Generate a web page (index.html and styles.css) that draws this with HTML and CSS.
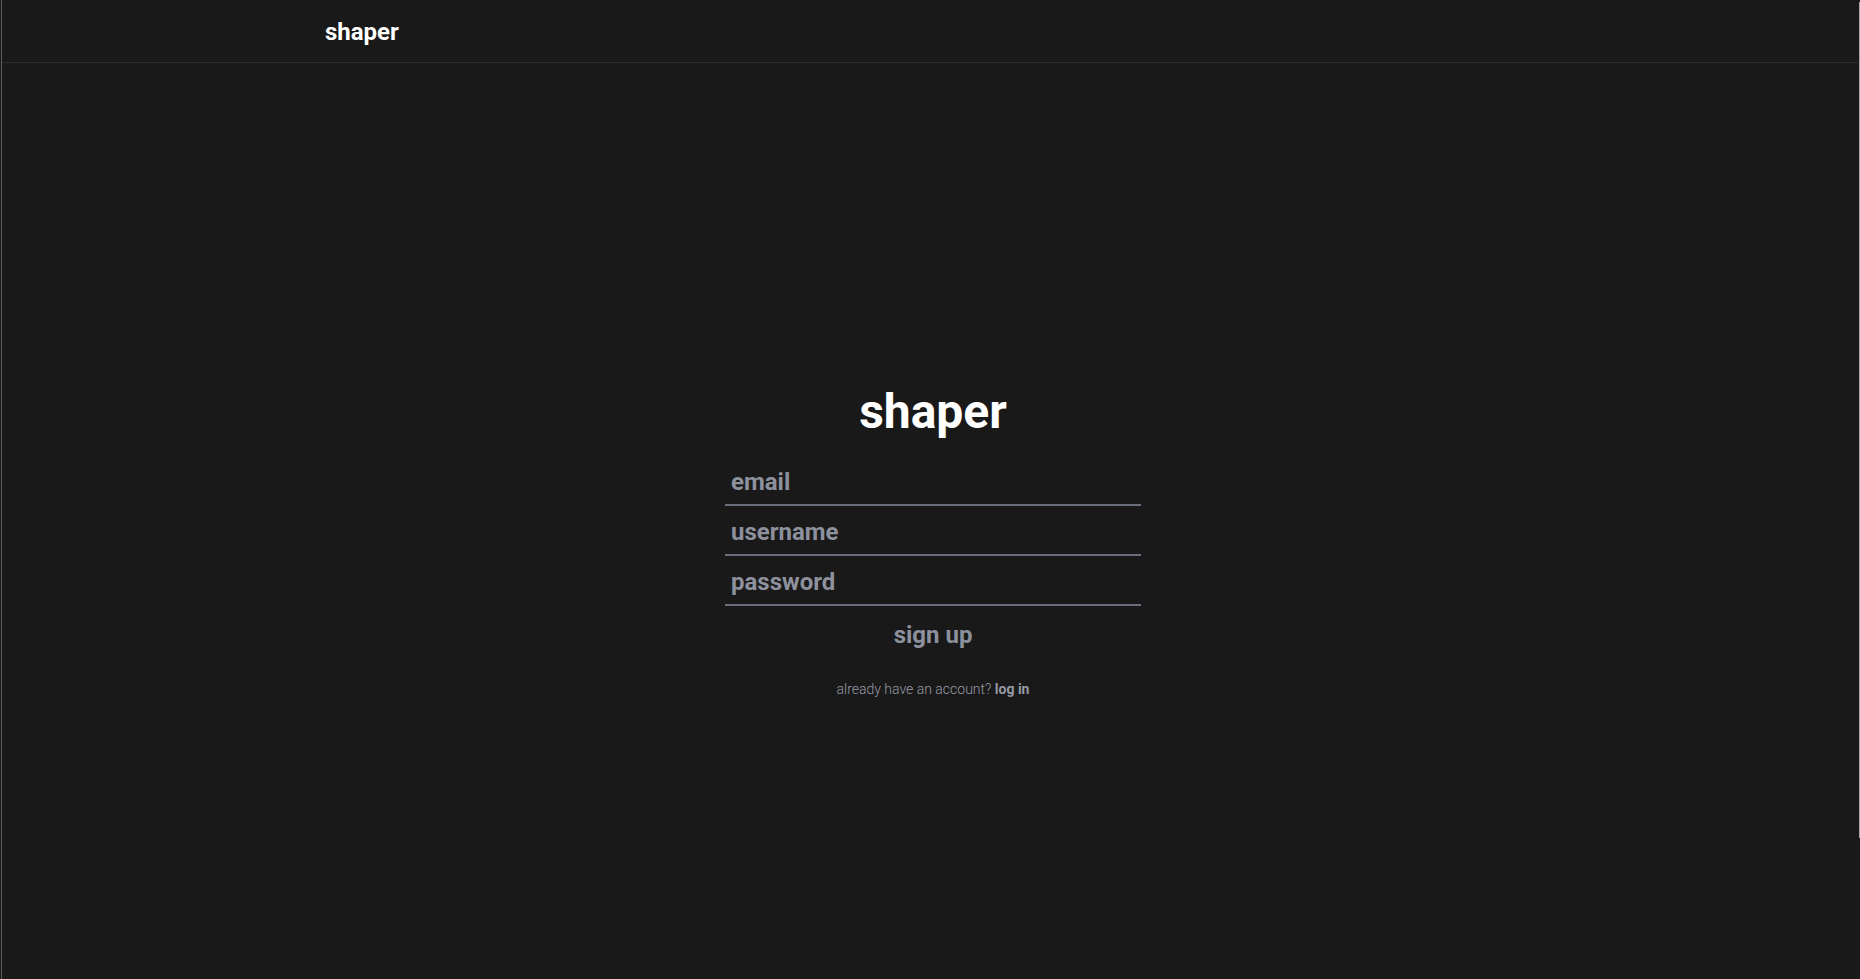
FILE: index.html
```html
<!DOCTYPE html>
<html lang="en">
<head>
<meta charset="utf-8">
<title>shaper</title>
<link rel="stylesheet" href="styles.css">
</head>
<body>
<div class="app">
  <header class="topbar">
    <div class="brand">shaper</div>
  </header>
  <main class="main">
    <form class="auth">
      <h1 class="title">shaper</h1>
      <input class="field" type="email" placeholder="email">
      <input class="field" type="text" placeholder="username">
      <input class="field" type="password" placeholder="password">
      <button class="submit" type="button">sign up</button>
      <p class="switch">already have an account? <a class="switch-link" href="#">log in</a></p>
    </form>
  </main>
  <div class="edge"></div>
</div>
</body>
</html>
```
FILE: styles.css
```css
html, body {
  margin: 0;
  padding: 0;
  background: #191919;
  height: 100%;
  overflow: hidden;
}
body {
  font-family: Roboto, "Open Sans", sans-serif;
  color: #8d919d;
}
.app {
  position: relative;
  margin-left: 1px;
  border-left: 1px solid #5e5e62;
  min-height: 979px;
  box-sizing: border-box;
}
.topbar {
  height: 62px;
  border-bottom: 1px solid #2e2e2e;
  margin-right: 2px;
  display: flex;
  align-items: center;
  padding-left: 323px;
}
.brand {
  font-size: 24px;
  font-weight: 700;
  color: #ffffff;
  margin-top: 2px;
}
.main {
  display: flex;
  justify-content: center;
  padding-top: 321px;
  padding-left: 4px;
}
.auth {
  width: 416px;
  display: flex;
  flex-direction: column;
  align-items: stretch;
}
.title {
  margin: 0 0 16px;
  font-size: 48px;
  font-weight: 700;
  color: #ffffff;
  text-align: center;
  line-height: 56px;
}
.field {
  height: 50px;
  box-sizing: border-box;
  background: transparent;
  border: none;
  border-bottom: 2px solid #6a6e7c;
  outline: none;
  padding: 4px 7px 0 6px;
  font-family: Roboto, "Open Sans", sans-serif;
  font-size: 24px;
  font-weight: 700;
  color: #8d919d;
}
.field::placeholder {
  color: #8d919d;
  opacity: 1;
}
.submit {
  margin-top: 15px;
  align-self: center;
  background: transparent;
  border: none;
  padding: 0;
  font-family: Roboto, "Open Sans", sans-serif;
  font-size: 24px;
  font-weight: 700;
  line-height: 28px;
  color: #8d919d;
  cursor: pointer;
}
.switch {
  margin: 32px 0 0;
  text-align: center;
  font-size: 14px;
  font-weight: 300;
  line-height: 16px;
  color: #959aa5;
}
.switch-link {
  color: #959aa5;
  font-weight: 700;
  text-decoration: none;
}
.edge {
  position: absolute;
  top: 2px;
  right: 0;
  width: 1px;
  height: 836px;
  background: #a9a9a9;
}
```
